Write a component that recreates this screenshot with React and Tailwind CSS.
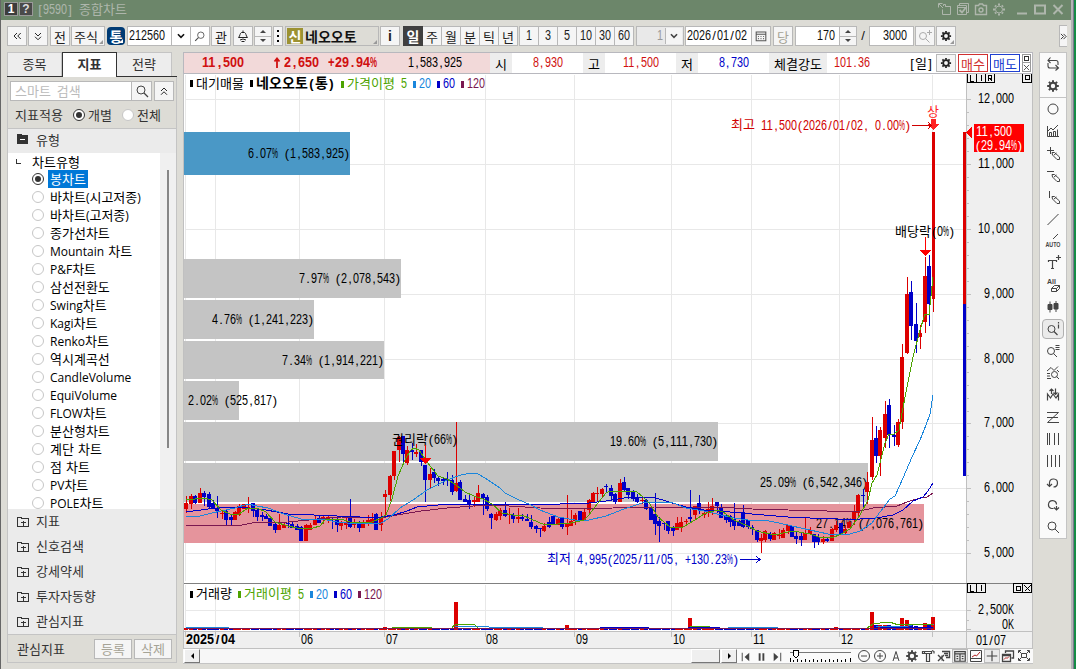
import React, { useState } from 'react';

const RED = '#dc0000';
const BLUE = '#0000c8';
const GREEN = '#4ca300';
const SKY = '#1a86dc';
const MAROON = '#7a1850';

// [up, high, bodyTop, bodyBottom, low] in chart pixels, oldest first
const CANDLES = [
  [1, 496, 503, 509, 513], [1, 494, 496, 504, 509], [0, 495, 496, 503, 504], [1, 488, 493, 503, 503], [0, 491, 493, 497, 506],
  [0, 492, 494, 507, 508], [0, 500, 503, 509, 509], [0, 496, 508, 511, 518], [1, 510, 513, 514, 519], [0, 510, 511, 520, 525],
  [0, 514, 517, 520, 525], [1, 511, 512, 520, 520], [1, 504, 506, 515, 516], [1, 504, 504, 509, 509], [1, 497, 507, 508, 513],
  [0, 503, 503, 511, 517], [0, 508, 510, 517, 521], [0, 512, 515, 517, 521], [0, 514, 516, 519, 519], [0, 517, 518, 526, 526],
  [0, 523, 524, 530, 533], [1, 514, 525, 530, 530], [1, 522, 525, 528, 528], [0, 515, 523, 524, 528], [0, 522, 524, 528, 528],
  [0, 524, 526, 530, 530], [0, 526, 527, 541, 541], [1, 524, 525, 541, 541], [1, 523, 525, 530, 530], [1, 516, 519, 525, 525],
  [0, 516, 518, 523, 523], [1, 515, 517, 519, 524], [1, 515, 517, 519, 523], [0, 517, 519, 520, 529], [0, 518, 519, 525, 532],
  [1, 521, 523, 526, 530], [1, 517, 522, 525, 529], [0, 499, 518, 527, 528], [1, 519, 522, 525, 528], [0, 521, 523, 528, 532],
  [1, 520, 522, 528, 528], [1, 515, 520, 523, 526], [1, 513, 519, 523, 523], [0, 513, 514, 530, 530], [1, 512, 517, 525, 531],
  [1, 490, 494, 497, 516], [1, 475, 476, 495, 501], [1, 451, 451, 476, 480], [1, 436, 437, 450, 462], [0, 436, 436, 454, 462],
  [1, 446, 450, 463, 465], [0, 443, 450, 452, 460], [1, 444, 452, 454, 457], [0, 450, 450, 462, 466], [0, 465, 465, 480, 502],
  [1, 468, 474, 480, 488], [0, 469, 472, 478, 483], [0, 476, 478, 481, 486], [0, 477, 479, 481, 485], [0, 472, 479, 481, 486],
  [0, 475, 480, 492, 495], [1, 422, 483, 491, 492], [0, 480, 482, 500, 500], [0, 495, 499, 502, 502], [0, 494, 500, 505, 509],
  [1, 497, 500, 502, 507], [1, 485, 493, 502, 502], [0, 493, 494, 498, 515], [0, 495, 497, 509, 511], [0, 513, 514, 518, 529],
  [1, 512, 514, 520, 521], [1, 508, 510, 516, 520], [0, 502, 510, 516, 517], [1, 508, 514, 515, 524], [0, 513, 515, 519, 523],
  [1, 508, 517, 519, 523], [0, 514, 517, 519, 521], [0, 514, 519, 521, 521], [0, 515, 522, 527, 529], [0, 525, 526, 529, 533],
  [0, 528, 528, 529, 537], [1, 523, 526, 531, 532], [0, 517, 522, 527, 528], [0, 515, 516, 525, 525], [1, 517, 519, 525, 525],
  [0, 517, 517, 527, 529], [1, 495, 523, 527, 535], [1, 510, 521, 526, 526], [1, 513, 515, 521, 525], [0, 511, 511, 521, 521],
  [1, 508, 512, 521, 521], [1, 499, 500, 510, 515], [1, 492, 493, 502, 502], [1, 487, 493, 494, 502], [1, 488, 489, 494, 497],
  [0, 484, 486, 487, 492], [0, 485, 488, 496, 500], [0, 493, 494, 502, 504], [1, 479, 483, 502, 502], [0, 477, 482, 490, 492],
  [0, 488, 488, 495, 499], [0, 490, 491, 499, 501], [0, 494, 497, 502, 503], [1, 496, 500, 501, 504], [0, 499, 500, 509, 510],
  [0, 508, 508, 520, 520], [0, 493, 514, 524, 535], [0, 517, 521, 526, 542], [0, 522, 523, 524, 530], [0, 521, 521, 531, 534],
  [0, 526, 527, 531, 536], [1, 517, 523, 530, 530], [1, 517, 522, 527, 532], [1, 519, 521, 522, 526], [0, 490, 517, 519, 522],
  [1, 506, 506, 515, 519], [0, 495, 503, 509, 514], [1, 510, 513, 515, 518], [1, 502, 509, 513, 517], [1, 498, 506, 510, 515],
  [0, 502, 502, 506, 513], [0, 504, 507, 518, 518], [0, 514, 515, 520, 523], [0, 515, 516, 522, 527], [0, 503, 519, 526, 530],
  [0, 520, 521, 526, 526], [0, 505, 512, 527, 528], [0, 520, 520, 527, 529], [0, 525, 527, 529, 535], [0, 530, 530, 540, 542],
  [1, 534, 538, 541, 553], [1, 530, 531, 540, 542], [0, 532, 534, 539, 541], [1, 532, 533, 540, 540], [1, 529, 535, 536, 539],
  [1, 528, 530, 538, 538], [1, 525, 525, 531, 534], [0, 526, 526, 537, 537], [0, 531, 536, 539, 544], [0, 533, 536, 540, 546],
  [1, 517, 533, 540, 540], [1, 527, 530, 534, 534], [0, 534, 534, 542, 548], [0, 534, 537, 542, 545], [1, 536, 539, 542, 544],
  [0, 538, 539, 541, 542], [1, 528, 529, 541, 541], [1, 521, 525, 530, 532], [0, 523, 523, 534, 534], [1, 525, 529, 533, 534],
  [1, 521, 522, 528, 528], [1, 505, 511, 520, 525], [1, 494, 495, 513, 517], [0, 489, 495, 496, 507], [1, 472, 482, 492, 504],
  [1, 417, 440, 477, 480], [0, 426, 438, 456, 463], [1, 427, 430, 456, 476], [1, 401, 414, 438, 448], [0, 399, 405, 435, 448],
  [0, 425, 435, 437, 446], [1, 419, 422, 445, 447], [1, 344, 357, 422, 429], [1, 277, 294, 353, 354], [0, 281, 292, 326, 340],
  [0, 303, 324, 341, 353], [1, 325, 333, 337, 349], [1, 257, 276, 322, 333], [0, 255, 266, 304, 326], [1, 132, 132, 299, 312],
];

const MA5 = '186,500 204,498 212,500 221,510 230,514 239,514 248,508 257,508 266,512 275,522 288,526 297,528 305,529 313,528 320,526 326,519 341,519 350,522 359,523 372,522 381,518 386,515 392,499 398,476 405,460 410,451 414,448 419,450 427,462 438,476 447,479 456,485 465,492 474,496 483,499 492,504 502,513 513,515 522,515 531,519 545,525 558,524 571,523 584,520 589,515 598,503 606,493 610,491 629,491 637,492 643,497 650,504 658,517 670,527 683,527 695,520 704,514 717,510 723,512 734,520 748,526 757,531 774,535 793,531 810,534 819,537 832,538 841,534 850,529 860,515 868,500 872,483 877,475 885,443 889,434 894,434 899,430 902,413 907,387 913,357 920,330 925,314 929,315 933,277';
const MA20 = '186,517 200,516 212,513 221,511 235,508 248,504 257,506 268,508 284,514 301,519 314,519 327,520 337,522 347,523 381,523 388,519 400,508 413,500 427,490 447,480 461,475 472,473 478,474 485,478 500,488 505,493 517,499 531,505 540,510 558,517 575,520 589,520 606,516 624,509 642,503 660,502 673,503 686,508 704,511 717,514 734,518 748,520 769,521 779,523 792,526 810,530 828,534 850,534 860,531 872,523 880,512 890,499 895,496 903,478 912,457 920,440 926,425 930,414 933,395';
const MA60 = '186,512 208,509 230,507 248,508 266,510 288,514 314,515 337,516 360,517 381,517 394,515 407,511 417,507 438,505 461,504 526,504 560,504 589,503 606,501 624,498 643,497 653,497 669,502 686,507 704,510 730,512 752,514 788,517 810,518 837,519 860,519 876,518 893,515 903,510 913,501 923,497 928,491 933,483';
const MA120 = '186,525 242,525 252,523 288,522 319,519 341,517 381,518 397,515 421,511 447,508 487,505 509,506 540,508 575,509 613,508 655,507 717,507 752,509 788,510 827,511 860,511 873,508 897,506 907,502 920,498 927,497 933,493';

// supply zones behind the candles
const ZONES = [
  { y: 132, h: 43, ty: 153, x2: 350, fill: '#4a98c6', label: '6.07% (1,583,925)', tx: 248 },
  { y: 259, h: 39, ty: 278, x2: 401, fill: '#c4c4c4', label: '7.97% (2,078,543)', tx: 299 },
  { y: 300, h: 39, ty: 319, x2: 314, fill: '#c4c4c4', label: '4.76% (1,241,223)', tx: 212 },
  { y: 341, h: 38, ty: 360, x2: 384, fill: '#c4c4c4', label: '7.34% (1,914,221)', tx: 282 },
  { y: 381, h: 39, ty: 400, x2: 239, fill: '#c4c4c4', label: '2.02% (525,817)', tx: 188 },
  { y: 422, h: 39, ty: 441, x2: 718, fill: '#c4c4c4', label: '19.60% (5,111,730)', tx: 610 },
  { y: 463, h: 39, ty: 482, x2: 868, fill: '#c4c4c4', label: '25.09% (6,542,346)', tx: 760 },
  { y: 504, h: 39, ty: 523, x2: 924, fill: '#e5949c', label: '27.14% (7,076,761)', tx: 816 },
];

const GRID_X = [185, 215, 299, 384, 485, 574, 671, 751, 839, 932];
const GRID_Y = [99, 164, 229, 294, 359, 423, 488, 553];
const PRICES = ['12,000', '11,000', '10,000', '9,000', '8,000', '7,000', '6,000', '5,000'];
const MONTHS = [[301, '06'], [386, '07'], [486, '08'], [576, '09'], [673, '10'], [753, '11'], [841, '12']];

// volume bar tops, by candle index (everything else is a sliver)
const VOLUMES = {
  45: 627, 61: 602, 86: 625, 114: 618, 147: 627, 155: 612, 156: 625, 157: 625, 158: 625, 159: 625, 160: 627, 161: 627,
  162: 618, 163: 620, 164: 625, 165: 626, 166: 627, 167: 623, 168: 625, 169: 617,
};

// runs of hangul, runs of digits, and every other character by itself
const split = (str) => str.match(/[\u3131-\uD79D]+|[0-9]+|[^\u3131-\uD79D0-9]/g) || [];
const isHangul = (str) => /[\u3131-\uD79D]/.test(str);
const isDigits = (str) => /[0-9]/.test(str);
const segWidth = (seg, bold) => seg.length * (isHangul(seg) ? (bold ? 13 : 12) : bold ? 7 : 6);

// fixed pitch text inside the chart, y is the vertical centre
const ChartText = ({ x, y, fill = '#000', bold, children }) => {
  let cx = x;
  return (
    <g fill={fill} fontWeight={bold ? 700 : 400} fontFamily='"Liberation Sans", sans-serif' fontSize="14">
      {split(children).map((seg, i) => {
        const w = segWidth(seg, bold);
        const at = cx;
        cx += w;
        if (seg === ' ') return null;
        if (isHangul(seg)) {
          return (
            <text key={i} x={at} y={y + 4} textLength={w} fontSize={bold ? 14 : 13} fontFamily='"Noto Sans CJK KR", sans-serif'>
              {seg}
            </text>
          );
        }
        if (isDigits(seg) || /[%K+]/.test(seg)) {
          return <text key={i} x={at} y={y + 4.5} textLength={w} lengthAdjust="spacingAndGlyphs">{seg}</text>;
        }
        return <text key={i} x={at + w / 2} y={y + 4.5} textAnchor="middle" fontSize="13">{seg}</text>;
      })}
    </g>
  );
};

const glyphClass = (seg, bold) => {
  if (isHangul(seg)) return bold ? 'text-[14px] font-bold' : 'text-[13px]';
  if (seg === '%') return bold ? 'inline-block origin-left scale-x-[.56] text-[14px] font-bold' : 'inline-block origin-left scale-x-[.48] text-[14px]';
  if (seg === '+') return 'inline-block origin-left scale-x-[.8] text-[14px] font-bold';
  if (isDigits(seg)) return bold ? 'inline-block origin-left scale-x-[.9] text-[14px] font-bold' : 'inline-block origin-left scale-x-[.771] text-[14px]';
  return bold ? 'text-[13px] font-bold' : 'text-[13px]';
};

// same fixed pitch text for the bars around the chart
const Txt = ({ children, bold, className = '' }) => (
  <span className={`inline-flex shrink-0 -translate-y-px items-baseline whitespace-pre leading-none ${className}`}>
    {split(children).map((seg, i) => (
      <span
        key={i}
        className={isHangul(seg) ? 'inline-block' : isDigits(seg) || seg === '%' || seg === '+'
          ? "inline-block font-['Liberation_Sans',sans-serif]"
          : "inline-block text-center font-['Liberation_Sans',sans-serif]"}
        style={{ width: segWidth(seg, bold) }}
      >
        <span className={glyphClass(seg, bold)}>{seg}</span>
      </span>
    ))}
  </span>
);

const Svg = ({ size = 16, children, className = '' }) => (
  <svg width={size} height={size} viewBox="0 0 16 16" fill="none" stroke="currentColor" strokeWidth="1" className={`shrink-0 ${className}`}>
    {children}
  </svg>
);

const Gear = ({ size = 16, className }) => (
  <Svg size={size} className={className}>
    <circle cx="8" cy="8" r="3.2" strokeWidth="2" />
    <path d="M8 2.2v2M8 11.8v2M2.2 8h2M11.8 8h2M3.9 3.9l1.4 1.4M10.7 10.7l1.4 1.4M3.9 12.1l1.4-1.4M10.7 5.3l1.4-1.4" strokeWidth="2" />
  </Svg>
);

const Search = ({ className }) => (
  <Svg className={className}>
    <circle cx="7" cy="7" r="4" />
    <path d="M10 10l4 4" strokeWidth="1.3" />
  </Svg>
);

const Chevron = () => (
  <Svg size={14}>
    <path d="M4.5 6l3.5 3.5L11.5 6" strokeWidth="1.8" />
  </Svg>
);

const Btn = ({ className = '', children }) => (
  <button className={`relative flex h-5 shrink-0 items-center justify-center border border-[#b8b8b8] bg-[#f5f5f5] text-[#222] ${className}`}>
    {children}
  </button>
);

const Corner = () => <span className="absolute bottom-px right-px border-b-4 border-l-4 border-b-[#999] border-l-transparent" />;

const Spin = ({ className = '' }) => (
  <div className={`flex h-5 w-[18px] shrink-0 flex-col border border-[#b8b8b8] bg-[#f5f5f5] text-[#444] ${className}`}>
    <div className="flex flex-1 items-center justify-center border-b border-[#b8b8b8]">
      <span className="border-x-[3px] border-b-[3px] border-x-transparent border-b-[#444]" />
    </div>
    <div className="flex flex-1 items-center justify-center">
      <span className="border-x-[3px] border-t-[3px] border-x-transparent border-t-[#444]" />
    </div>
  </div>
);

const TitleBar = () => (
  <div className="flex h-5 items-center bg-[#6c866a] pl-[3px] text-[#aeb6ac]">
    <span className="-mt-0.5 flex h-[14px] w-[14px] items-center justify-center border border-[#999] bg-[#3c3c3c] font-['Liberation_Sans'] text-[12px] font-bold leading-none text-white">1</span>
    <span className="-mt-0.5 ml-px flex h-[14px] w-[14px] items-center justify-center border border-[#999] bg-[#4a4a4a] font-['Liberation_Sans'] text-[12px] font-bold leading-none text-[#ddd]">?</span>
    <Txt className="-mt-0.5 ml-1">[9590] 종합차트</Txt>
    <div className="ml-auto flex items-center gap-[2px] pb-0.5 pr-[5px]">
      <Svg>
        <path d="M6.500 5V3.500h2v2h5v8h-8v-5M8.500 5.500h5M2 3l4 4M1.500 6.500v-4h4" />
      </Svg>
      <Svg>
        <path d="M4.500 4V2.500h9v9H12M2.500 4.500h9v9h-9zM2.500 6.500h9" />
        <path d="M4.500 9l2.500 2.500L10.500 7" strokeWidth="1.800" />
      </Svg>
      <Svg>
        <path d="M2.500 4.500h3l1-1.500h3l1 1.500h3v9h-11z" strokeWidth="1.400" />
        <circle cx="8" cy="9" r="2" strokeWidth="1.400" />
      </Svg>
      <Svg>
        <circle cx="8" cy="8.500" r="3.500" />
        <path d="M8 2.500v2M8 12.500v2M2 8.500h2M12 8.500h2M4 4.500l1 1M11 11.500l1 1M4 12.500l1-1M11 5.500l1-1" strokeWidth="2" />
      </Svg>
      <Svg className="ml-[5px]">
        <path d="M3 12.500h10" strokeWidth="2" />
      </Svg>
      <Svg>
        <path d="M3 4.500h10v8H3z" strokeWidth="2" />
      </Svg>
      <Svg>
        <path d="M3.500 4l9 9M12.500 4l-9 9" strokeWidth="2" />
      </Svg>
    </div>
  </div>
);

const PERIODS = ['주', '월', '분', '틱', '년'];
const MINUTES = ['1', '3', '5', '10', '30', '60'];

const Toolbar = () => (
  <div className="flex h-5 items-center text-[#111]">
    <Btn className="w-5">
      <Svg size={12}><path d="M8 4L4 8l4 4M13 4L9 8l4 4" strokeWidth="1.300" /></Svg>
    </Btn>
    <Btn className="ml-px w-5">
      <Svg size={12}><path d="M4 4l4 4 4-4M4 9l4 4 4-4" strokeWidth="1.300" /></Svg>
    </Btn>
    <Btn className="ml-0.5 w-5"><Txt>전</Txt></Btn>
    <Btn className="ml-px w-[34px] pr-1"><Txt>주식</Txt><Corner /></Btn>
    <div className="relative ml-0.5 flex h-[18px] w-[18px] shrink-0 items-center justify-center rounded bg-[#003b74] text-white">
      <Txt bold>통</Txt>
      <span className="absolute bottom-0.5 right-0.5 border-b-4 border-l-4 border-b-white border-l-transparent" />
    </div>
    <div className="ml-0.5 flex h-5 shrink-0 border border-[#b8b8b8] bg-white">
      <span className="flex w-[43px] items-center pl-px"><Txt>212560</Txt></span>
      <span className="flex w-[19px] items-center justify-center border-l border-[#b8b8b8]"><Chevron /></span>
      <span className="flex w-[19px] items-center justify-center border-l border-[#b8b8b8] text-[#444]"><Search className="-scale-x-[.8] scale-y-[.8]" /></span>
    </div>
    <Btn className="ml-px w-5"><Txt>관</Txt></Btn>
    <Btn className="ml-0.5 w-5">
      <Svg><path d="M6.500 4.500c-2 1-1 3-3 5h9c-2-2-1-4-3-5zM8 2.500v2M5 12l3-1 3 1M6.500 13.500h3" /></Svg>
    </Btn>
    <Spin className="ml-px" />
    <Btn className="ml-px w-[10px] flex-col gap-[3px]">
      <i className="h-0.5 w-0.5 bg-black" /><i className="h-0.5 w-0.5 bg-black" /><i className="h-0.5 w-0.5 bg-black" />
    </Btn>
    <div className="relative ml-0.5 flex h-5 w-[94px] shrink-0 items-center border border-[#b8b8b8] bg-[#dddcd6]">
      <span className="ml-px flex h-4 w-4 items-center justify-center bg-[#9c9232] text-white"><Txt bold>신</Txt></span>
      <Txt bold className="ml-0.5">네오오토</Txt>
      <Corner />
    </div>
    <Btn className="ml-px w-5"><b className="font-['Liberation_Sans'] text-[14px] leading-none">i</b></Btn>
    <div className="ml-[3px] flex shrink-0">
      <span className="flex h-5 w-5 items-center justify-center bg-[#404040] text-white"><Txt bold>일</Txt></span>
      {PERIODS.map((p) => (
        <Btn key={p} className="w-[19px] border-l-0"><Txt>{p}</Txt></Btn>
      ))}
    </div>
    <div className="ml-px flex shrink-0 border-l border-[#b8b8b8]">
      {MINUTES.map((m) => (
        <Btn key={m} className="w-[19px] border-l-0"><Txt>{m}</Txt></Btn>
      ))}
    </div>
    <div className="ml-0.5 flex h-5 w-[48px] shrink-0 border border-[#b8b8b8] bg-[#e9e9e9] p-px text-[#999]">
      <span className="flex flex-1 items-center justify-end border-r border-[#b8b8b8] pr-0.5"><Txt>1</Txt></span>
      <span className="flex w-4 items-center justify-center bg-[#f5f5f5] text-[#444]"><Chevron /></span>
    </div>
    <div className="ml-px flex h-5 w-[86px] shrink-0 border border-[#b8b8b8] bg-white">
      <span className="flex w-[65px] items-center pl-px"><Txt>2026/01/02</Txt></span>
      <span className="flex flex-1 items-center justify-center border-l border-[#b8b8b8] bg-[#f5f5f5] text-[#555]">
        <Svg size={14}><path d="M2.500 3.500h11v10h-11zM2.500 6h11M4.500 8.500h1M7.500 8.500h1M10.500 8.500h1M4.500 11h1M7.500 11h1M10.500 11h1" strokeWidth="1.200" /></Svg>
      </span>
    </div>
    <Btn className="ml-0.5 w-5"><Txt className="text-[#a5a396]">당</Txt></Btn>
    <div className="ml-0.5 flex h-5 w-[44px] shrink-0 items-center justify-end border border-r-0 border-[#b8b8b8] bg-white pr-1"><Txt>170</Txt></div>
    <Spin className="w-4" />
    <span className="flex w-3 shrink-0 justify-center"><Txt>/</Txt></span>
    <div className="flex h-5 w-[45px] shrink-0 items-center justify-end border border-[#b8b8b8] bg-white pr-1.5"><Txt>3000</Txt></div>
    <Btn className="ml-px w-5">
      <Svg className="text-[#aaa]"><circle cx="6" cy="8" r="3.500" /><path d="M8.500 10.500l4 4M12.500 2v5M10 4.500h5" /></Svg>
    </Btn>
    <Btn className="ml-px w-5"><Gear size={14} /><Corner /></Btn>
    <Btn className="-my-1 ml-auto h-[22px] w-2 border-r-0"><Svg size={7}><path d="M2 2l6 6-6 6M8 2l6 6-6 6" strokeWidth="2" /></Svg></Btn>
  </div>
);

const CHART_TYPES = [
  '봉차트', '바차트(시고저종)', '바차트(고저종)', '종가선차트', 'Mountain 차트', 'P&F차트', '삼선전환도', 'Swing차트', 'Kagi차트',
  'Renko차트', '역시계곡선', 'CandleVolume', 'EquiVolume', 'FLOW차트', '분산형차트', '계단 차트', '점 차트', 'PV차트', 'POLE차트',
];

const Radio = ({ on }) => (
  <span className={on
    ? 'flex h-3 w-3 shrink-0 items-center justify-center rounded-full border border-[#333] bg-white'
    : 'flex h-3 w-3 shrink-0 rounded-full border border-[#c6c6c6] bg-white'}
  >
    {on && <span className="h-[6px] w-[6px] rounded-full bg-[#333]" />}
  </span>
);

const FolderIcon = () => (
  <svg width="12" height="12" viewBox="0 0 12 12" fill="none" stroke="#333" shapeRendering="crispEdges" className="shrink-0">
    <path d="M.5 10.500v-9h4v1h7v8zM6 4.500v5M3.500 6.500h5" />
  </svg>
);

// latin parts of a name are set in a slightly smaller face
const ItemName = ({ name }) => (
  <span className="whitespace-pre pb-px">
    {name.split(/([\x20-\x7e]+)/).map((part, i) => (
      /^[\x20-\x7e]+$/.test(part)
        ? <span key={i} className="font-['Open_Sans'] text-[12px] leading-none [word-spacing:1px]">{part}</span>
        : part
    ))}
  </span>
);

const Sidebar = () => {
  const [selected, setSelected] = useState('봉차트');

  return (
    <div className="flex h-[611px] w-[170px] shrink-0 flex-col text-[13px] leading-none text-[#333]">
      <div className="flex h-[25px] border-b border-[#333]">
        <div className="flex w-[55px] items-center justify-center border border-b-0 border-[#c4c4c4] bg-[#ededed] pb-0.5">종목</div>
        <div className="-mb-px flex w-[55px] items-center justify-center border border-b-0 border-[#333] bg-white pb-[3px] font-bold">지표</div>
        <div className="flex w-[55px] items-center justify-center border border-b-0 border-l-0 border-[#c4c4c4] bg-[#ededed] pb-0.5">전략</div>
      </div>

      <div className="flex flex-1 flex-col border-x border-b border-[#c4c4c4]">
        <div className="mt-1 flex h-5 pl-0.5">
          <span className="flex w-[122px] items-center border border-[#b8b8b8] bg-white pb-0.5 pl-1 text-[#bbb] [word-spacing:3px]">스마트 검색</span>
          <Btn className="w-5 border-l-0 text-[#444]"><Search /></Btn>
          <Btn className="ml-0.5 w-5"><Svg size={12}><path d="M4 8l4-4 4 4M4 13l4-4 4 4" strokeWidth="1.300" /></Svg></Btn>
        </div>
        <div className="flex h-[27px] items-center pl-[7px]">
          <span className="w-[58px]">지표적용</span>
          <Radio on />
          <span className="ml-[3px] w-[34px]">개별</span>
          <Radio />
          <span className="ml-[3px]">전체</span>
        </div>

        <div className="flex h-[25px] items-center border-t border-[#c4c4c4] bg-[#ebebeb] pb-1 pl-2">
          <svg width="13" height="12" viewBox="0 0 13 12" shapeRendering="crispEdges" className="shrink-0">
            <path d="M1 11V1h5v1h6v9z" fill="#333" />
            <path d="M4 6.500h5" stroke="#fff" />
          </svg>
          <span className="ml-[7px]">유형</span>
        </div>
        <div className="flex h-[356px] overflow-hidden text-black">
          <div className="w-[152px] shrink-0 bg-white">
            <div className="flex h-[17px] items-center">
              <span className="ml-2 h-[5px] w-[5px] border-b border-l border-[#333]" />
              <span className="ml-[11px]">차트유형</span>
            </div>
            {CHART_TYPES.map((name) => (
              <div key={name} onClick={() => setSelected(name)} className="flex h-[18px] items-center whitespace-nowrap pl-6">
                <Radio on={name === selected} />
                <span className={name === selected
                  ? 'ml-1 flex h-[18px] items-center bg-[#0078d7] px-0.5 text-white'
                  : 'ml-1 flex h-[18px] items-center px-0.5'}
                >
                  <ItemName name={name} />
                </span>
              </div>
            ))}
          </div>
          <div className="flex-1 bg-[#f0f0f0] pl-[7px] pt-[17px]">
            <div className="h-[278px] w-0.5 bg-[#868686]" />
          </div>
        </div>

        <div className="flex-1 bg-[#ebebeb]">
          {['지표', '신호검색', '강세약세', '투자자동향', '관심지표'].map((name) => (
            <div key={name} className="flex h-[25px] items-center pl-[9px]">
              <FolderIcon />
              <span className="ml-[7px] pb-0.5">{name}</span>
            </div>
          ))}
        </div>
        <div className="flex h-[28px] items-center border-t border-[#c4c4c4] pl-[9px]">
          <span className="flex-1 pb-px">관심지표</span>
          <Btn className="w-[38px] bg-[#eeeeec]"><span className="text-[#a5a396]">등록</span></Btn>
          <Btn className="ml-0.5 mr-1 w-[38px] bg-[#eeeeec]"><span className="text-[#a5a396]">삭제</span></Btn>
        </div>
      </div>
    </div>
  );
};

const QuoteBar = () => (
  <div className="flex h-[22px] border border-[#b8b8be] bg-white text-black">
    <div className="flex w-[306px] items-center bg-[#f2d9d9] pb-px text-[#d01010]">
      <Txt bold className="ml-[18px]">11,500</Txt>
      <svg width="8" height="12" viewBox="0 0 8 12" className="ml-[29px] shrink-0" stroke="currentColor" fill="none">
        <path d="M4 1v10M1.500 4.500L4 1.500l2.500 3" strokeWidth="1.800" />
      </svg>
      <Txt bold className="ml-[3px]">2,650</Txt>
      <Txt bold className="ml-[9px]">+29.94%</Txt>
      <Txt className="ml-[31px] text-black">1,583,925</Txt>
    </div>
    <div className="flex w-[22px] items-center justify-center bg-[#ededed] pb-px"><Txt>시</Txt></div>
    <div className="flex w-[71px] items-center justify-center pb-px text-[#d01010]"><Txt>8,930</Txt></div>
    <div className="flex w-[22px] items-center justify-center bg-[#ededed] pb-px"><Txt>고</Txt></div>
    <div className="flex w-[71px] items-center justify-center pb-px text-[#d01010]"><Txt>11,500</Txt></div>
    <div className="flex w-[22px] items-center justify-center bg-[#ededed] pb-px"><Txt>저</Txt></div>
    <div className="flex w-[71px] items-center justify-center pb-px text-[#0000c8]"><Txt>8,730</Txt></div>
    <div className="flex w-[58px] items-center justify-center bg-[#ededed] pb-px"><Txt>체결강도</Txt></div>
    <div className="flex flex-1 items-center pl-[7px] text-[#d01010]">
      <Txt>101.36</Txt>
      <Txt className="ml-[39px] text-black">[일]</Txt>
      <Btn className="ml-[3px] h-[18px] w-5"><Gear size={14} /></Btn>
      <span className="ml-[2px] flex h-[18px] w-[30px] items-center justify-center border border-[#d03030] text-[#d03030]"><Txt>매수</Txt></span>
      <span className="ml-[2px] flex h-[18px] w-[30px] items-center justify-center border border-[#2040d0] text-[#2040d0]"><Txt>매도</Txt></span>
      <span className="ml-[2px] flex flex-col text-[#444]">
        <span className="flex h-[9px] w-[9px] items-center justify-center border border-[#999]"><i className="h-[5px] w-[5px] border border-[#333]" /></span>
        <span className="flex h-[9px] w-[9px] items-center justify-center border border-t-0 border-[#999]"><Svg size={7}><path d="M2 2l12 12M14 2L2 14" strokeWidth="2" /></Svg></span>
      </span>
    </div>
  </div>
);

const Mark = ({ x, y, fill }) => <rect x={x} y={y - 3} width="3" height="7" fill={fill} />;

const Tag = ({ x, y, children }) => (
  <g>
    <rect x={x + 0.5} y={y + 0.5} width="9" height="9" fill="#efefef" stroke="#000" />
    {children}
  </g>
);

const MaLegend = ({ x, y, name }) => (
  <g>
    <Mark x={x} y={y} fill={GREEN} />
    <ChartText x={x + 6} y={y} fill={GREEN}>{`${name} 5`}</ChartText>
    <Mark x={x + 72} y={y} fill={SKY} />
    <ChartText x={x + 78} y={y} fill={SKY}>20</ChartText>
    <Mark x={x + 96} y={y} fill={BLUE} />
    <ChartText x={x + 102} y={y} fill={BLUE}>60</ChartText>
    <Mark x={x + 120} y={y} fill={MAROON} />
    <ChartText x={x + 126} y={y} fill={MAROON}>120</ChartText>
  </g>
);

const Chart = () => {
  const candleX = (i) => Math.round(184.4 + i * 4.42);

  return (
    <svg width="850" height="575" viewBox="183 74 850 575" className="block shrink-0 bg-white" shapeRendering="crispEdges">
      {/* axis backgrounds */}
      <rect x="967" y="74" width="66" height="575" fill="#efefef" />
      <rect x="184" y="632" width="849" height="17" fill="#efefef" />

      {/* grid */}
      {GRID_X.map((x) => (
        <path key={x} d={`M${x + 0.5} 75V581M${x + 0.5} 585V631`} stroke="#e8e8e8" />
      ))}
      {GRID_Y.map((y) => (
        <path key={y} d={`M185 ${y + 0.5}H966`} stroke="#e8e8e8" />
      ))}
      <path d="M185 610.500H966" stroke="#e8e8e8" />

      {ZONES.map((z) => (
        <rect key={z.y} x="184" y={z.y} width={z.x2 - 184} height={z.h} fill={z.fill} />
      ))}
      {ZONES.map((z) => (
        <ChartText key={z.y} x={z.tx} y={z.ty}>{z.label}</ChartText>
      ))}

      {/* legends */}
      <Mark x={190} y={83} fill="#000" />
      <ChartText x={196} y={83.500}>대기매물</ChartText>
      <Mark x={250} y={83} fill="#000" />
      <ChartText x={256} y={83.500} bold>네오오토(통)</ChartText>
      <MaLegend x={341} y={83.500} name="가격이평" />

      {/* candles */}
      {CANDLES.map(([up, high, top, bottom, low], i) => {
        const x = candleX(i);
        const last = i === CANDLES.length - 1;
        return (
          <g key={i} fill={up ? RED : BLUE}>
            <rect x={x + 2} y={high} width="1" height={Math.max(low - high, 1)} />
            <rect x={last ? x + 1 : x} y={top} width={last ? 3 : 4} height={Math.max(bottom - top, 1)} />
          </g>
        );
      })}

      <g fill="none" strokeWidth="1">
        <polyline points={MA120} stroke={MAROON} />
        <polyline points={MA60} stroke={BLUE} />
        <polyline points={MA20} stroke={SKY} />
        <polyline points={MA5} stroke={GREEN} />
      </g>

      {/* event markers */}
      <ChartText x={392} y={439.500}>권리락(66%)</ChartText>
      <ChartText x={895} y={231.500}>배당락(0%)</ChartText>
      <path d="M425.500 445V459M925.500 237V251" stroke="#f00" />
      <path d="M420 458h11l-5.500 6zM920 250h11l-5.500 6z" fill="#f00" />
      <ChartText x={927} y={111.500} fill="#f22">상</ChartText>
      <path d="M931 119h5v5h3l-5.500 6-5.500-6h3z" fill="#f22" />
      <ChartText x={731} y={125} fill="#d00000">최고 11,500(2026/01/02, 0.00%)</ChartText>
      <path d="M912 125.500h18M928 122l3 3.500-3 3.500" stroke="#d00000" fill="none" />
      <ChartText x={547} y={559} fill={BLUE}>최저 4,995(2025/11/05, +130.23%)</ChartText>
      <path d="M740 559.500h20M756 556l4 3.500-4 3.500" stroke={BLUE} fill="none" />

      {/* day range on the axis */}
      <rect x="963" y="132" width="3" height="172" fill={RED} />
      <rect x="963" y="304" width="3" height="172" fill={BLUE} />

      {/* price axis */}
      <path d="M966.500 74V649" stroke="#c0c0c0" />
      {GRID_Y.map((y, i) => (
        <g key={y}>
          <path d={`M967 ${y + 0.5}h4`} stroke="#c0c0c0" />
          {i < 7 && <path d={`M967 ${y + 13.5}h2M967 ${y + 26.5}h2M967 ${y + 39.5}h2M967 ${y + 52.5}h2`} stroke="#c0c0c0" />}
          <ChartText x={1014 - PRICES[i].length * 6} y={y - 0.5}>{PRICES[i]}</ChartText>
        </g>
      ))}
      <path d="M966 132.500l6-5.500v11z" fill="#f00" />
      <rect x="974" y="124" width="50" height="28" fill="#f00" />
      <ChartText x={976} y={131.500} fill="#fff">11,500</ChartText>
      <ChartText x={975} y={145.500} fill="#fff">(29.94%)</ChartText>

      <Tag x={967} y={73}><path d="M970.500 75v6h3" stroke="#000" fill="none" /></Tag>
      <Tag x={976} y={73}><path d="M981.500 75v6" stroke="#000" /></Tag>
      <Tag x={985} y={73}><path d="M988.500 81v-6h3v3h-3M990 78l2 3" stroke="#000" fill="none" /></Tag>
      <Tag x={1022} y={73}><rect x="1025.500" y="75.500" width="4" height="4" fill="none" stroke="#000" /></Tag>

      {/* volume pane */}
      <MaLegend x={238} y={594} name="거래이평" />
      <Mark x={190} y={594} fill="#000" />
      <ChartText x={196} y={594}>거래량</ChartText>
      {CANDLES.map(([up], i) => {
        const top = VOLUMES[i] || 628;
        return <rect key={i} x={candleX(i)} y={top} width="4" height={630 - top} fill={up || i === 114 ? RED : BLUE} />;
      })}
      <g fill="none">
        <path d="M186 627.500h43M455 626.500h34M489 627.500h54M728 627.500h50M876 626.500h30l6-1.500 22-1" stroke={SKY} />
        <path d="M392 627.500h40M452 627.500l4-3.500h18l4 4M690 626.500h20M867 628l6-4 10-1.500h8l6 2h36" stroke={GREEN} />
        <path d="M600 627.500h49M688 627.500h32M880 627.500h53" stroke={BLUE} />
        <path d="M186 628.500H934" stroke={MAROON} />
      </g>
      <path d="M183 583.500H1033" stroke="#808080" />
      <Tag x={967} y={583}><path d="M970.500 585v6h3" stroke="#000" fill="none" /></Tag>
      <Tag x={976} y={583}><path d="M981.500 585v6" stroke="#000" /></Tag>
      <Tag x={1013} y={583}><rect x="1016.500" y="586.500" width="4" height="4" fill="none" stroke="#000" /></Tag>
      <Tag x={1022} y={583}><path d="M1024.500 585.500l6 6M1030.500 585.500l-6 6" stroke="#000" /></Tag>
      <path d="M967 610.500h4M967 620.500h2M967 629.500h4" stroke="#c0c0c0" />
      <ChartText x={978} y={609.500}>2,500K</ChartText>
      <ChartText x={1002} y={624.500}>0K</ChartText>

      {/* date axis */}
      <path d="M184 631.500H1033M184 648.500H1033" stroke="#c0c0c0" />
      {GRID_X.map((x) => (
        <path key={x} d={`M${x + 0.5} 632v5`} stroke="#c0c0c0" />
      ))}
      <ChartText x={186} y={639.500} bold>2025/04</ChartText>
      {MONTHS.map(([x, label]) => (
        <ChartText key={label} x={x} y={639.500}>{label}</ChartText>
      ))}
      <ChartText x={976} y={640.500}>01/07</ChartText>

      <path d="M183.500 74V649M1032.500 74V649" stroke="#c0c0c0" />
    </svg>
  );
};

const raised = 'flex h-[14px] shrink-0 items-center justify-center border border-b-[#777] border-l-white border-r-[#777] border-t-white bg-[#efefef]';

const BottomBar = () => (
  <div className="flex h-[15px] items-center border-b border-[#c4c4c4] bg-[#fafafa] text-[#444]">
    <div className={`ml-px w-4 ${raised}`}>
      <span className="border-y-[3px] border-r-[3px] border-y-transparent border-r-black" />
    </div>
    <div className="h-[14px] w-[491px] bg-[#f7f7f7]" />
    <div className={`w-[29px] ${raised}`} />
    <div className={`ml-px w-4 ${raised}`}>
      <span className="border-y-[3px] border-l-[3px] border-y-transparent border-l-black" />
    </div>
    <div className="flex h-[14px] shrink-0 items-center">
      <Svg className="ml-px" size={15}><path d="M4.500 4v9" /><path d="M12 4v9L7 8.500z" fill="currentColor" stroke="none" /></Svg>
      <Svg size={15} className="ml-px"><path d="M6 4.500v8M10 4.500v8" strokeWidth="2" /></Svg>
      <Svg size={15}><path d="M12.500 4v9" /><path d="M5 4v9l5-4.500z" fill="currentColor" stroke="none" /></Svg>
      <svg width="62" height="14" className="ml-[6px] shrink-0 text-black" fill="none" stroke="currentColor" shapeRendering="crispEdges">
        <path d="M0 3.500h61" stroke="#777" />
        <path d="M.5 13v-4M3.500 13v-2M7.500 13v-3M11.500 13v-2M15.500 13v-3M19.500 13v-2M23.500 13v-3M27.500 13v-2M31.500 13v-3M35.500 13v-2M39.500 13v-3M43.500 13v-2M47.500 13v-3M51.500 13v-2M55.500 13v-3M60.500 13v-4" />
        <path d="M3.500 1.500h5v5L6 9 3.500 6.500z" fill="#fff" />
      </svg>
    </div>
    <div className="ml-[4px] flex h-[14px] shrink-0 items-center">
      <Svg><circle cx="8" cy="8" r="5.500" /><path d="M5 8h6" /></Svg>
      <Svg><circle cx="8" cy="8" r="5.500" /><path d="M5 8h6M8 5v6" /></Svg>
      <Svg><path d="M5 13l3-9.500L11 13M6 10h4" /></Svg>
      <Gear />
      <Svg><path d="M2.500 3.500h2v2h-2zM4.500 3.500h7v2h-7zM12 2.500l2 1v2M6.500 5.500v8h3v-8" strokeWidth="1.200" /></Svg>
      <Svg><path d="M6 3.500h7.500v6H10M8 5.500h4M9 7.500h3M2 7l6 6M8 7l-6 6M6 7.500v5" strokeWidth="1.400" /></Svg>
      <span className="flex h-[14px] w-4 items-center justify-center border border-[#bbb] bg-[#ebebeb]">
        <Svg size={14}><path d="M2 3h12v11H2zM2 5.500h12M8 6v8M4 8.500h2M4 11h2M10 8.500h2M10 11h2" strokeWidth="1.400" /></Svg>
      </span>
      <Svg>
        <path d="M2.500 2.500h11v11h-11zM2.500 10.500h11" />
        <path d="M4 9l3-2 1.500 1L12 4" stroke="#b02020" />
      </Svg>
      <span className="flex h-[14px] w-4 items-center justify-center border border-[#bbb] bg-[#ebebeb]">
        <Svg size={14}><path d="M8 2v12M2 8h12" strokeWidth="1.300" /></Svg>
      </span>
      <Svg>
        <path d="M5.500 5V3h8v7h-2M2.500 6.500h8v7h-8zM2.500 7.500h8" strokeWidth="1.300" />
        <path d="M4 11.500l2-2 1 1 2-2" stroke="#b02020" />
      </Svg>
      <Svg><path d="M5.500 5.500h5v4h-5zM2.500 5V2.500H5M11 2.500h2.500V5M2.500 10v2.500H5M11 12.500h2.500V10M3 3l2.500 2.500M13 3l-2.500 2.500M3 12l2.500-2.500M13 12l-2.500-2.500" /></Svg>
    </div>
  </div>
);

const pencil = 'M7 7.500h2.500l5 4.500v2.500H12L7.500 10zM9 10l2.500-2';

const TOOLS = [
  <circle cx="8" cy="8" r="5" />,
  <path d="M2.500 3v10.500H14M2.500 8.500L6 5l2 2 5-5M4.500 13V9.500h2V13M8.500 13V8.500h2V13M12.500 13V6.500" />,
  <path d={`M5.500 2v7M2 5.500h7${pencil}`} />,
  <path d={`M2 4.500h7${pencil}`} />,
  <path d={`M4.500 2v7${pencil}`} />,
  <path d="M2.500 14L13.500 3" />,
  <g>
    <path d="M8 6l5-5" />
    <text x="0.500" y="13.500" fontSize="7" fontWeight="700" textLength="15" fontFamily="Liberation Sans" lengthAdjust="spacingAndGlyphs" fill="currentColor" stroke="none">AUTO</text>
  </g>,
  <path d="M3.500 7V5.500h8V7M7.500 5.500v8M6 13.500h3M13.500 0v5M11 2.500h5" strokeWidth="1.200" />,
  <g>
    <text x="2" y="7" fontSize="7" fontWeight="700" fontFamily="Liberation Sans" fill="currentColor" stroke="none">All</text>
    <path d="M6.500 11.500l3-3h5l-3 3zM6.500 11.500v3h5v-3M11.500 14.500l3-3v-3" />
  </g>,
  <g>
    <path d="M5 2.500v11M11 2v11" />
    <path d="M3 5.500h4v5H3zM9 4.500h4v5.500H9z" fill="currentColor" />
  </g>,
  <g>
    <circle cx="6.500" cy="8" r="3.500" />
    <path d="M9 10.500l3.500 3.500M13.500 1v1.500M13.500 3.500v4" strokeWidth="1.200" />
  </g>,
  <g>
    <circle cx="6" cy="8" r="3.500" />
    <path d="M8.500 10.500l3.500 3.500M10.500 2.500h4M10.500 4.500h4M10.500 6.500h4" />
  </g>,
  <g>
    <path d="M2 6l4-3.500 3 3 4-4M2 8.500h3M2 11h3M2 13.500h4M12 5l2 2" />
    <circle cx="9.500" cy="9.500" r="3" />
    <path d="M11.500 11.500l2.500 2.500" />
  </g>,
  <path d="M2.500 13.500V7l3 4L8 7l3 4 2.500-4v6.500M6.500 7V2M4.500 4l2-2 2 2M10.500 1.500v6M8.500 5.500l2 2 2-2" strokeWidth="1.200" />,
  <path d="M2 3.500h11.500L2.500 13.500H14M2 8.500h11" />,
  <path d="M2.500 2v12M4.500 2v12M9.500 2v12M13.500 2v12" />,
  <path d="M2.500 2v12M6.500 2v12M10.500 2v12M14.500 2v12" />,
  <path d="M4.500 11V7.500a4 4 0 1 1 4 4.500M2 9l2.500 2.500L7 9" strokeWidth="1.200" />,
  <path d="M11.500 13V9M6.500 11.500a4 4 0 1 1 5-4M9 10.500l2.500 2.500 2.500-2.500M6.500 11.500h2" strokeWidth="1.200" />,
  <g>
    <circle cx="7" cy="7" r="4" />
    <path d="M10 10l4 4" />
  </g>,
];

const ToolRail = () => (
  <div className="flex h-[487px] w-7 shrink-0 flex-col border border-[#c4c4c4] bg-[#fafafa] text-[#444]">
    <div className="flex h-[22px] items-center justify-center">
      <Svg><path d="M5.500 1.500l-2.500 3 2.500 2.500M3 4.500h8a2 2 0 0 1 2 2V9M3 7v3a2 2 0 0 0 2 2h8M10.500 9l3 3-3 2.500" strokeWidth="1.100" /></Svg>
    </div>
    <div className="flex h-[22px] items-center justify-center"><Gear /></div>
    <div className="h-px shrink-0 bg-[#c4c4c4]" />
    {TOOLS.map((tool, i) => (
      <div key={i} className="flex h-[22px] shrink-0 items-center justify-center">
        <span className={i === 10 ? 'flex h-5 w-[22px] items-center justify-center rounded border border-[#b0b0b0] bg-[#ebebeb]' : 'flex'}>
          <Svg>{tool}</Svg>
        </span>
      </div>
    ))}
  </div>
);

export default function App() {
  return (
    <div className="flex h-[669px] w-[1076px] overflow-hidden bg-[#dddcd6] font-['Noto_Sans_CJK_KR',sans-serif]">
      <div className="w-px shrink-0 bg-[#666]" />
      <div className="flex w-[1070px] shrink-0 flex-col">
        <TitleBar />
        <div className="px-[6px] pr-1 pt-[6px]">
          <Toolbar />
        </div>
        <div className="flex items-start pl-[6px] pt-[6px]">
          <Sidebar />
          <div className="ml-[6px] flex w-[850px] shrink-0 flex-col">
            <QuoteBar />
            <Chart />
            <BottomBar />
          </div>
          <div className="ml-[6px]">
            <ToolRail />
          </div>
        </div>
      </div>
      <div className="w-0.5 shrink-0 bg-[#b4b4b6]" />
      <div className="w-px shrink-0 bg-[#7d7a90]" />
      <div className="flex-1 bg-[#158c46]" />
    </div>
  );
}
